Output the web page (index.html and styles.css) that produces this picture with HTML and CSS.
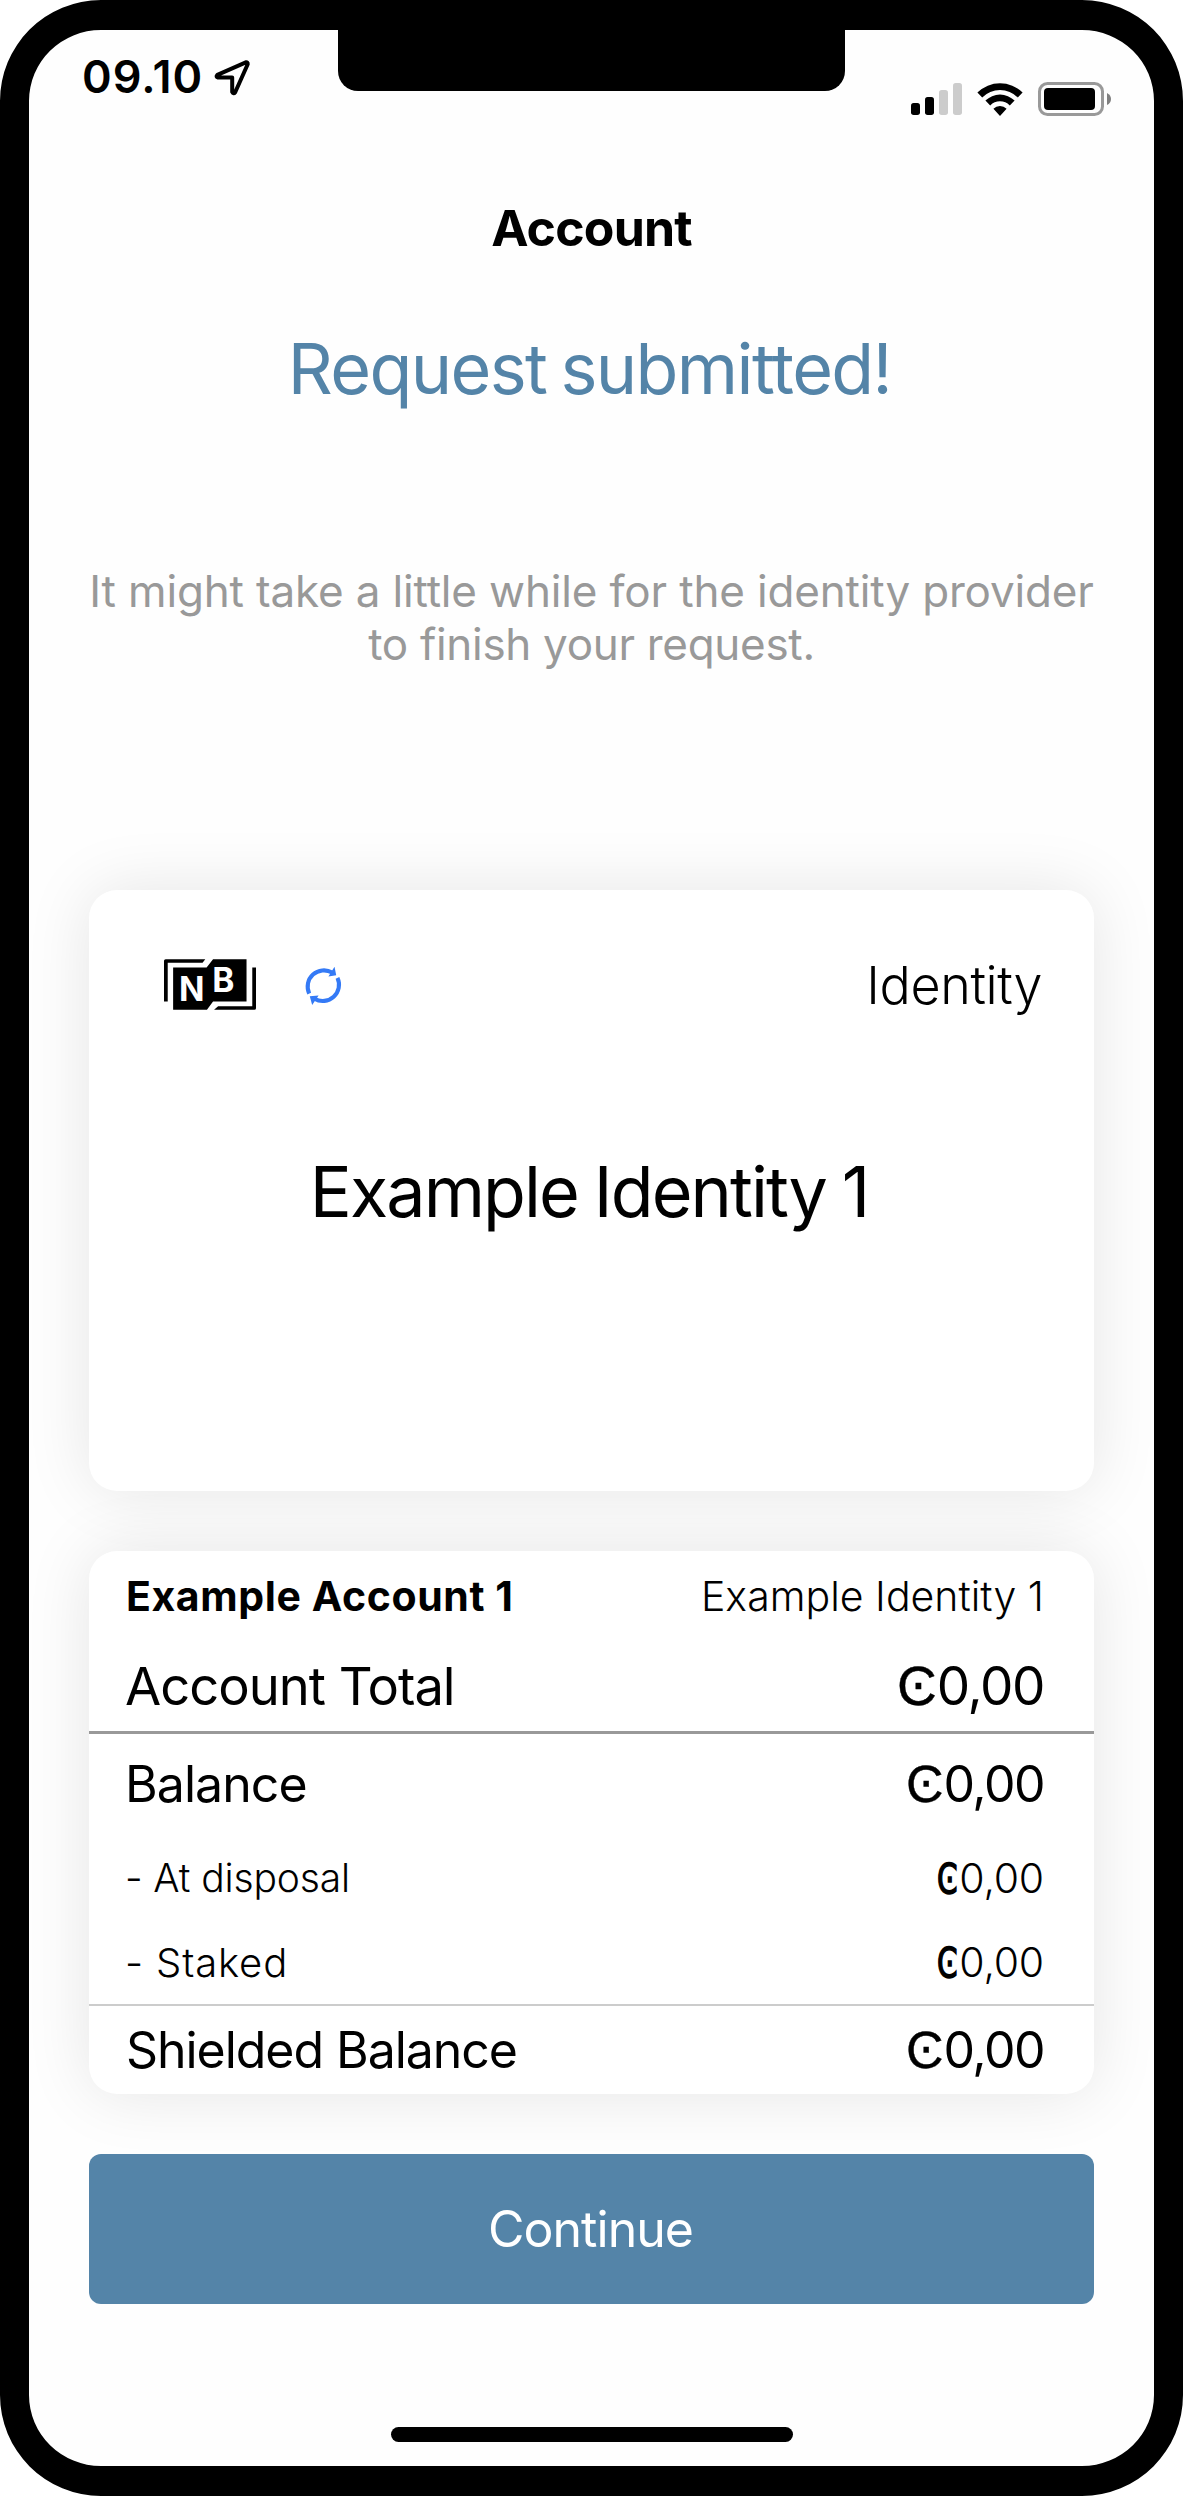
FILE: index.html
```html
<!DOCTYPE html>
<html lang="en">
<head>
<meta charset="utf-8">
<title>Account</title>
<link rel="stylesheet" href="styles.css">
</head>
<body>
<div class="phone">
  <div class="notch"></div>
  <header class="status">
    <div class="clock">
      <span class="time">09.10</span>
      <svg class="location" width="36" height="36" viewBox="0 0 36 36"><path d="M31.8 2.3 3.4 14.8Q1.5 16.9 4 17.6H18.2V31.9Q19.4 34.6 21.2 32.2L33.7 4.2Q33.9 2 31.8 2.3Z" fill="none" stroke="#000" stroke-width="4" stroke-linejoin="round"/></svg>
    </div>
    <div class="indicators">
      <svg width="51" height="32" viewBox="0 0 51 32"><rect y="20" width="9" height="12" rx="2.7"/><rect x="14" y="14" width="9" height="18" rx="2.7"/><rect x="28" y="7" width="9" height="25" rx="2.7" fill="#ccc"/><rect x="42" width="9" height="32" rx="2.7" fill="#ccc"/></svg>
      <svg width="46" height="33" viewBox="0 0 46 33"><path d="M0.4 9.6A32 32 0 0 1 45.6 9.6L40.8 14.4A25.2 25.2 0 0 0 5.2 14.4ZM8.4 17.6A20.7 20.7 0 0 1 37.6 17.6L32.8 22.4A13.9 13.9 0 0 0 13.2 22.4ZM16.4 25.8A9.3 9.3 0 0 1 29.6 25.8L23 33Z"/></svg>
      <svg width="74" height="34" viewBox="0 0 74 34"><rect x="1.5" y="1.5" width="63" height="31" rx="8" fill="none" stroke="#999" stroke-width="3"/><rect x="6" y="6" width="51" height="22" rx="4"/><path d="M69 11Q73 13 73 17T69 23Z" fill="#808080"/></svg>
    </div>
  </header>
  <h1 class="title">Account</h1>
  <h2 class="headline">Request submitted!</h2>
  <p class="note"><span class="note-first">It might take a little while for the identity provider</span><br><span class="note-last">to finish your request.</span></p>
  <section class="card identity">
    <div class="identity-top">
      <svg class="logo" width="92" height="51" viewBox="102 117 272 150"><path d="M102 242V122Q102 117 107 117H224L216 128H113V242ZM262 256H363V142H374V262Q374 267 369 267H250Z"/><path d="M129 142H228L247 117H346V242H247L229 267H129Z"/><text class="logo-letter" x="146" y="240">N</text><text class="logo-letter" x="245" y="215">B</text></svg>
      <svg class="refresh" width="38" height="40" viewBox="0 0 112 118"><path d="M15.3 81.2A48 48 0 0 1 83 19.4M98.7 34.8A48 48 0 0 1 31 96.6" fill="none" stroke="#347af6" stroke-width="12"/><path d="M90 2 95 27 72 31ZM24 115 17 89 43 87Z" fill="#347af6"/></svg>
      <span class="kind">Identity</span>
    </div>
    <div class="identity-name">Example Identity 1</div>
  </section>
  <section class="card account">
    <div class="row row-name"><strong class="account-name">Example Account 1</strong><span class="owner">Example Identity 1</span></div>
    <div class="row row-total"><span class="total-label">Account Total</span><span class="amount amount-total"><span class="ccd">Ͼ</span>0,00</span></div>
    <div class="row row-balance"><span class="label">Balance</span><span class="amount"><span class="ccd">Ͼ</span>0,00</span></div>
    <div class="row row-disposal"><span class="disposal">- At disposal</span><span class="amount-sub"><span class="ccd-sub">Ͼ</span>0,00</span></div>
    <div class="row row-staked"><span class="staked">- Staked</span><span class="amount-sub"><span class="ccd-sub">Ͼ</span>0,00</span></div>
    <div class="row row-shielded"><span class="label shielded">Shielded Balance</span><span class="amount"><span class="ccd">Ͼ</span>0,00</span></div>
  </section>
  <button class="continue">Continue</button>
  <div class="home"></div>
</div>
</body>
</html>
```
FILE: styles.css
```css
* { box-sizing: border-box; }

body {
  margin: 0;
  background: #fff;
  color: #000;
  font-family: Inter, "Liberation Sans", sans-serif;
  white-space: nowrap;
}

.phone {
  position: relative;
  display: flex;
  flex-direction: column;
  width: 1183px;
  height: 2496px;
  padding: 0 60px;
  border: solid #000;
  border-width: 30px 29px;
  border-radius: 101px;
  background: #fefefe;
}

.notch {
  position: absolute;
  top: -1px;
  left: 309px;
  width: 507px;
  height: 62px;
  border-radius: 0 0 20px 20px;
  background: #000;
}

.status {
  display: flex;
  justify-content: space-between;
  height: 143px;
  margin: 0 -18px 0 -7px;
}

.clock {
  display: flex;
  align-items: flex-start;
  gap: 11px;
  padding-top: 30px;
}

.time {
  font-size: 45px;
  font-weight: 600;
  line-height: 34px;
  letter-spacing: 1px;
}

.indicators {
  display: flex;
  align-items: center;
  gap: 15px;
  height: 34px;
  margin-top: 52px;
}

.title {
  margin: 0;
  font-size: 50px;
  font-weight: 700;
  line-height: 110px;
  letter-spacing: -0.8px;
  text-align: center;
}

.headline {
  margin: 0;
  padding: 38px 4px 0 0;
  color: #5484a8;
  font-size: 70px;
  font-weight: 400;
  line-height: 95px;
  letter-spacing: -1.6px;
  word-spacing: -4px;
  text-align: center;
}

.note {
  margin: 149px 0 0;
  color: #999;
  font-size: 44px;
  line-height: 53px;
  text-align: center;
}

.note-first { letter-spacing: -0.16px; }
.note-last { letter-spacing: -0.3px; }

.card {
  border-radius: 28px;
  background: #fff;
  box-shadow: 0 0 66px rgba(0, 0, 0, 0.1);
}

.identity {
  height: 601px;
  margin-top: 219px;
  padding-top: 60px;
}

.identity-top {
  display: flex;
  align-items: center;
  height: 70px;
  padding: 0 52px 0 75px;
}

.logo { margin-bottom: 2px; }

.logo-letter {
  fill: #fff;
  font-size: 99px;
  font-weight: 700;
}

.refresh {
  margin: 1px 0 0 48px;
  overflow: visible;
}

.kind {
  margin-left: auto;
  font-size: 52px;
  font-weight: 300;
  letter-spacing: -0.4px;
}

.identity-name {
  margin-top: 112px;
  padding-right: 5px;
  font-size: 70px;
  line-height: 120px;
  letter-spacing: -1.9px;
  word-spacing: -2px;
  text-align: center;
}

.account {
  height: 543px;
  margin-top: 60px;
}

.row {
  display: flex;
  justify-content: space-between;
  padding: 0 50px 0 36px;
}

.row-name { height: 90px; line-height: 90px; }
.row-total { height: 93px; line-height: 90px; border-bottom: 3px solid #999; }
.row-balance { height: 100px; line-height: 101px; }
.row-disposal { height: 89px; line-height: 88px; }
.row-staked { height: 83px; line-height: 79px; border-bottom: 2px solid #ccc; }
.row-shielded { height: 88px; line-height: 89px; }

.account-name {
  padding-left: 1px;
  font-size: 41px;
  font-weight: 700;
  letter-spacing: 0.6px;
}

.owner { font-size: 41px; font-weight: 300; letter-spacing: 0.02px; }
.total-label { font-size: 52.5px; letter-spacing: -1px; }
.label { font-size: 50px; letter-spacing: -0.95px; }
.shielded { padding-left: 1px; letter-spacing: -1.05px; }
.disposal { font-size: 39px; font-weight: 300; letter-spacing: -0.15px; }
.staked { font-size: 40px; font-weight: 300; letter-spacing: 0.85px; }

.amount { font-size: 50px; letter-spacing: -1.5px; }
.amount-total { font-size: 53px; letter-spacing: -1.4px; }
.amount-sub { font-size: 41px; font-weight: 300; letter-spacing: -0.2px; }

.ccd {
  font-family: "Liberation Sans", sans-serif;
  font-size: 1.04em;
  line-height: 1;
  letter-spacing: 0;
  -webkit-text-stroke: 0.4px #000;
}

.ccd-sub {
  display: inline-block;
  margin-right: 2px;
  font-family: "DejaVu Sans Condensed", "DejaVu Sans", sans-serif;
  font-weight: 400;
  line-height: 1;
  transform: scaleX(0.8);
  transform-origin: right;
  -webkit-text-stroke: 1.4px #000;
}

.continue {
  height: 150px;
  margin-top: 60px;
  padding: 1px 2px 0 0;
  border: 0;
  border-radius: 12px;
  background: #5484a8;
  color: #fff;
  font: 400 50px/149px Inter, sans-serif;
  letter-spacing: -0.95px;
}

.home {
  width: 402px;
  height: 15px;
  margin: 123px auto 0;
  border-radius: 8px;
  background: #000;
}
```
